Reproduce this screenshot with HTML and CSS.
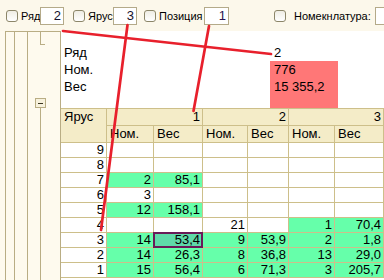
FILE: index.html
```html
<!DOCTYPE html>
<html lang="ru">
<head>
<meta charset="utf-8">
<title>Ярусы</title>
<link rel="stylesheet" href="styles.css">
</head>
<body>
<div class="toolbar">
  <div class="field f1"><span class="cb"></span><span class="lbl w1">Ряд</span><span class="inp">2</span></div>
  <div class="field f2"><span class="cb"></span><span class="lbl w2">Ярус</span><span class="inp">3</span></div>
  <div class="field f3"><span class="cb"></span><span class="lbl w3">Позиция</span><span class="inp inp-pos">1</span></div>
  <div class="field f4"><span class="cb cb-wide"></span><span class="lbl w4">Номекнлатура:</span><span class="inp inp-wide"></span></div>
</div>
<div class="main">
  <div class="groups">
    <svg class="group-lines" width="60" height="249" viewBox="0 0 60 249">
      <g stroke="#b9ad84" stroke-width="1" fill="none" shape-rendering="crispEdges">
        <line x1="5.5" y1="0.5" x2="60" y2="0.5"/>
        <line x1="5.5" y1="0" x2="5.5" y2="249"/>
        <line x1="14.5" y1="0" x2="14.5" y2="249"/>
        <line x1="27.5" y1="0" x2="27.5" y2="249"/>
        <line x1="40.5" y1="0" x2="40.5" y2="13.5"/>
        <line x1="40.5" y1="13.5" x2="45" y2="13.5"/>
        <line x1="40.5" y1="76" x2="40.5" y2="249"/>
        <rect x="35.5" y="67.5" width="10" height="9" fill="#f7f1dc"/>
      </g>
      <line x1="38" y1="72" x2="43" y2="72" stroke="#3a3520" stroke-width="1" shape-rendering="crispEdges"/>
    </svg>
  </div>
  <div class="sheet">
    <div class="summary">
      <div class="s-lbl r2">Ряд</div>
      <div class="s-val r2">2</div>
      <div class="s-lbl r3">Ном.</div>
      <div class="s-lbl r4">Вес</div>
      <div class="s-red">776<br>15 355,2</div>
    </div>
    <div class="grid">
      <div class="h h-tier">Ярус</div>
      <div class="h h-grp">1</div>
      <div class="h h-grp">2</div>
      <div class="h h-grp">3</div>
      <div class="h">Ном.</div><div class="h">Вес</div>
      <div class="h">Ном.</div><div class="h">Вес</div>
      <div class="h">Ном.</div><div class="h">Вес</div>

      <div class="c">9</div><div class="c"></div><div class="c"></div><div class="c"></div><div class="c"></div><div class="c"></div><div class="c"></div>
      <div class="c">8</div><div class="c"></div><div class="c"></div><div class="c"></div><div class="c"></div><div class="c"></div><div class="c"></div>
      <div class="c">7</div><div class="c g">2</div><div class="c g">85,1</div><div class="c"></div><div class="c"></div><div class="c"></div><div class="c"></div>
      <div class="c">6</div><div class="c">3</div><div class="c"></div><div class="c"></div><div class="c"></div><div class="c"></div><div class="c"></div>
      <div class="c">5</div><div class="c g">12</div><div class="c g">158,1</div><div class="c"></div><div class="c"></div><div class="c"></div><div class="c"></div>
      <div class="c">4</div><div class="c"></div><div class="c"></div><div class="c">21</div><div class="c"></div><div class="c g">1</div><div class="c g">70,4</div>
      <div class="c">3</div><div class="c g">14</div><div class="c sel">53,4</div><div class="c g">9</div><div class="c g">53,9</div><div class="c g">2</div><div class="c g">1,8</div>
      <div class="c">2</div><div class="c g">14</div><div class="c g">26,3</div><div class="c g">8</div><div class="c g">36,8</div><div class="c g">13</div><div class="c g">29,0</div>
      <div class="c">1</div><div class="c g">15</div><div class="c g">56,4</div><div class="c g">6</div><div class="c g">71,3</div><div class="c g">3</div><div class="c g">205,7</div>
    </div>
  </div>
</div>
<svg class="annot" width="384" height="280" viewBox="0 0 384 280">
  <g stroke="#e8202c" stroke-width="2.7" stroke-linecap="round" fill="none">
    <line x1="63" y1="31" x2="271" y2="54"/>
    <line x1="127.5" y1="25" x2="101" y2="230"/>
    <line x1="209" y1="26" x2="193.5" y2="111"/>
  </g>
</svg>
</body>
</html>
```

FILE: styles.css
```css
html, body {
  margin: 0;
  padding: 0;
}
body {
  width: 384px;
  height: 280px;
  overflow: hidden;
  position: relative;
  background: #fcf8eb;
  font-family: "Liberation Sans", Arial, sans-serif;
  color: #000;
}

/* toolbar */
.toolbar {
  height: 31px;
  display: flex;
  align-items: flex-start;
  padding-left: 6px;
  box-sizing: border-box;
  white-space: nowrap;
}
.field {
  display: flex;
  align-items: center;
  height: 18px;
  margin-top: 7px;
}
.f2 { margin-left: 9px; }
.f3 { margin-left: 7px; }
.f4 { margin-left: 45px; }
.cb {
  width: 12px;
  height: 12px;
  box-sizing: border-box;
  border: 1px solid #8c8669;
  border-radius: 3px;
  background: linear-gradient(#efede4, #ffffff);
  margin-right: 3px;
  margin-top: -1px;
}
.cb-wide { margin-right: 8px; }
.lbl {
  font-size: 11px;
  line-height: 14px;
}
.w1 { width: 19px; }
.w2 { width: 25px; }
.w3 { width: 45px; }
.w4 { width: 81px; }
.inp {
  width: 24px;
  height: 18px;
  box-sizing: border-box;
  border: 1px solid #b4aa89;
  background: #fff;
  text-align: right;
  padding-right: 2px;
  font-size: 13px;
  line-height: 16px;
  color: #14122e;
}
.inp-pos { width: 25px; color: #2a1250; }
.inp-wide { width: 9px; border-right: none; }

/* main */
.main {
  display: flex;
  height: 249px;
}
.groups {
  width: 60px;
  flex: none;
  background: #fefaee;
  border-right: 1px solid #b9ad84;
}
.group-lines { display: block; }
.sheet {
  flex: 1;
  background: #fff;
}

/* summary block */
.summary {
  display: grid;
  grid-template-columns: 209px 68px 1fr;
  grid-template-rows: 13px 17px 17px 17px 13px;
  font-size: 13px;
  line-height: 17px;
}
.s-lbl { grid-column: 1; padding-left: 3px; }
.s-val { grid-column: 2; padding-left: 4px; }
.r2 { grid-row: 2; }
.r3 { grid-row: 3; }
.r4 { grid-row: 4; }
.s-red {
  grid-column: 2;
  grid-row: 3 / 6;
  background: #ff7777;
  padding-left: 4px;
}

/* table */
.grid {
  display: grid;
  grid-template-columns: 45px 46px 48px 44px 40px 45px 48px;
  grid-template-rows: 16px 16px repeat(9, 14px);
  gap: 1px;
  padding: 1px 1px 1px 0;
  background: #cdbf8a;
  font-size: 13px;
}
.h {
  background: #f4ecc8;
  line-height: 16px;
  padding: 0 3px;
  white-space: nowrap;
}
.h-tier {
  grid-row: 1 / 3;
}
.h-grp {
  grid-column: span 2;
  text-align: right;
  padding-right: 2px;
}
.c {
  background: #fff;
  text-align: right;
  line-height: 14px;
  padding-right: 2px;
}
.g { background: #66ffaa; }
.sel {
  background: #5fdaa9;
  outline: 2px solid #6a1a58;
  outline-offset: -1px;
  position: relative;
  z-index: 1;
}

/* annotation lines drawn over the screenshot */
.annot {
  position: absolute;
  left: 0;
  top: 0;
  pointer-events: none;
  z-index: 5;
}
```
